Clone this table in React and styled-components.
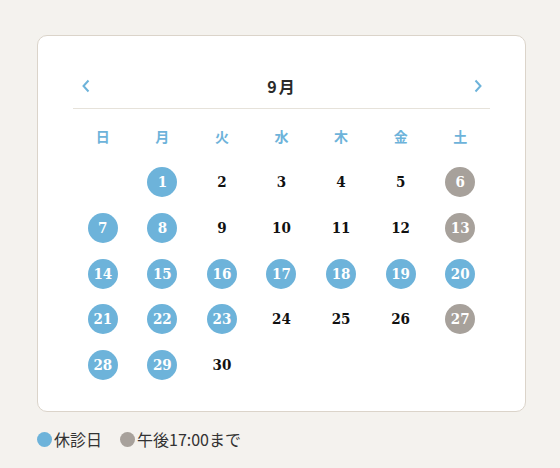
import React from "react";
import styled, { createGlobalStyle } from "styled-components";

const BLUE = "#6db3da";
const GRAY = "#a7a19b";

// 0: normal, 1: closed, 2: half day
const closed = [1, 7, 8, 14, 15, 16, 17, 18, 19, 20, 21, 22, 23, 28, 29];
const half = [6, 13, 27];
const weekdays = ["日", "月", "火", "水", "木", "金", "土"];
const firstOffset = 1;

const Global = createGlobalStyle`
  body {
    margin: 0;
    background: #f4f2ee;
    font-family: "Noto Sans CJK JP", "Noto Sans", sans-serif;
  }
`;

const Page = styled.div`
  padding: 35px 34px 0 37px;
`;

const Card = styled.section`
  background: #ffffff;
  border: 1px solid #dbd4ca;
  border-radius: 10px;
  padding: 33px 35px 31px;
`;

const Header = styled.div`
  display: flex;
  align-items: center;
  justify-content: space-between;
  height: 34px;
  padding: 0 7px 5px 8px;
  border-bottom: 1px solid #e6e2da;
`;

const Arrow = styled.button`
  border: 0;
  background: none;
  padding: 0;
  width: 10px;
  height: 14px;
  display: flex;
  align-items: center;
  justify-content: center;
  cursor: pointer;
`;

const Title = styled.h2`
  margin: 0;
  font-size: 16px;
  font-weight: 700;
  letter-spacing: 2px;
  color: #2a2a2a;
`;

const Weekdays = styled.div`
  display: grid;
  grid-template-columns: repeat(7, 1fr);
  height: 28px;
  margin-top: 13px;
  align-items: center;
`;

const Weekday = styled.div`
  text-align: center;
  font-size: 14px;
  font-weight: 700;
  color: ${BLUE};
`;

const Days = styled.div`
  display: grid;
  grid-template-columns: repeat(7, 1fr);
  grid-auto-rows: 30px;
  row-gap: 15.75px;
  margin-top: 17px;
`;

const Cell = styled.div`
  display: flex;
  align-items: center;
  justify-content: center;
`;

const Day = styled.span`
  width: 30px;
  height: 30px;
  border-radius: 50%;
  display: flex;
  align-items: center;
  justify-content: center;
  font-family: "DejaVu Serif", serif;
  font-stretch: condensed;
  font-weight: bold;
  font-size: 15px;
  background: ${(p) => (p.$kind === 1 ? BLUE : p.$kind === 2 ? GRAY : "transparent")};
  color: ${(p) => (p.$kind ? "#ffffff" : "#111111")};
`;

const Legend = styled.div`
  display: flex;
  align-items: center;
  gap: 18px;
  margin-top: 15px;
  font-size: 16px;
  color: #333;
`;

const LegendItem = styled.div`
  display: flex;
  align-items: center;
  gap: 2px;
`;

const Dot = styled.span`
  width: 15px;
  height: 15px;
  border-radius: 50%;
  background: ${(p) => p.$color};
`;

const Chevron = ({ dir }) => (
  <svg width="10" height="14" viewBox="0 0 10 14">
    <path
      d={dir === "left" ? "M7.5 1.5 L2.5 7 L7.5 12.5" : "M2.5 1.5 L7.5 7 L2.5 12.5"}
      fill="none"
      stroke={BLUE}
      strokeWidth="2"
    />
  </svg>
);

export default function App() {
  const cells = [];
  for (let i = 0; i < firstOffset; i++) cells.push(null);
  for (let d = 1; d <= 30; d++) cells.push(d);

  return (
    <Page>
      <Global />
      <Card>
        <Header>
          <Arrow aria-label="前の月">
            <Chevron dir="left" />
          </Arrow>
          <Title>9月</Title>
          <Arrow aria-label="次の月">
            <Chevron dir="right" />
          </Arrow>
        </Header>
        <Weekdays>
          {weekdays.map((w) => (
            <Weekday key={w}>{w}</Weekday>
          ))}
        </Weekdays>
        <Days>
          {cells.map((d, i) => (
            <Cell key={i}>
              {d && (
                <Day $kind={closed.includes(d) ? 1 : half.includes(d) ? 2 : 0}>{d}</Day>
              )}
            </Cell>
          ))}
        </Days>
      </Card>
      <Legend>
        <LegendItem>
          <Dot $color={BLUE} />
          休診日
        </LegendItem>
        <LegendItem>
          <Dot $color={GRAY} />
          午後17:00まで
        </LegendItem>
      </Legend>
    </Page>
  );
}
